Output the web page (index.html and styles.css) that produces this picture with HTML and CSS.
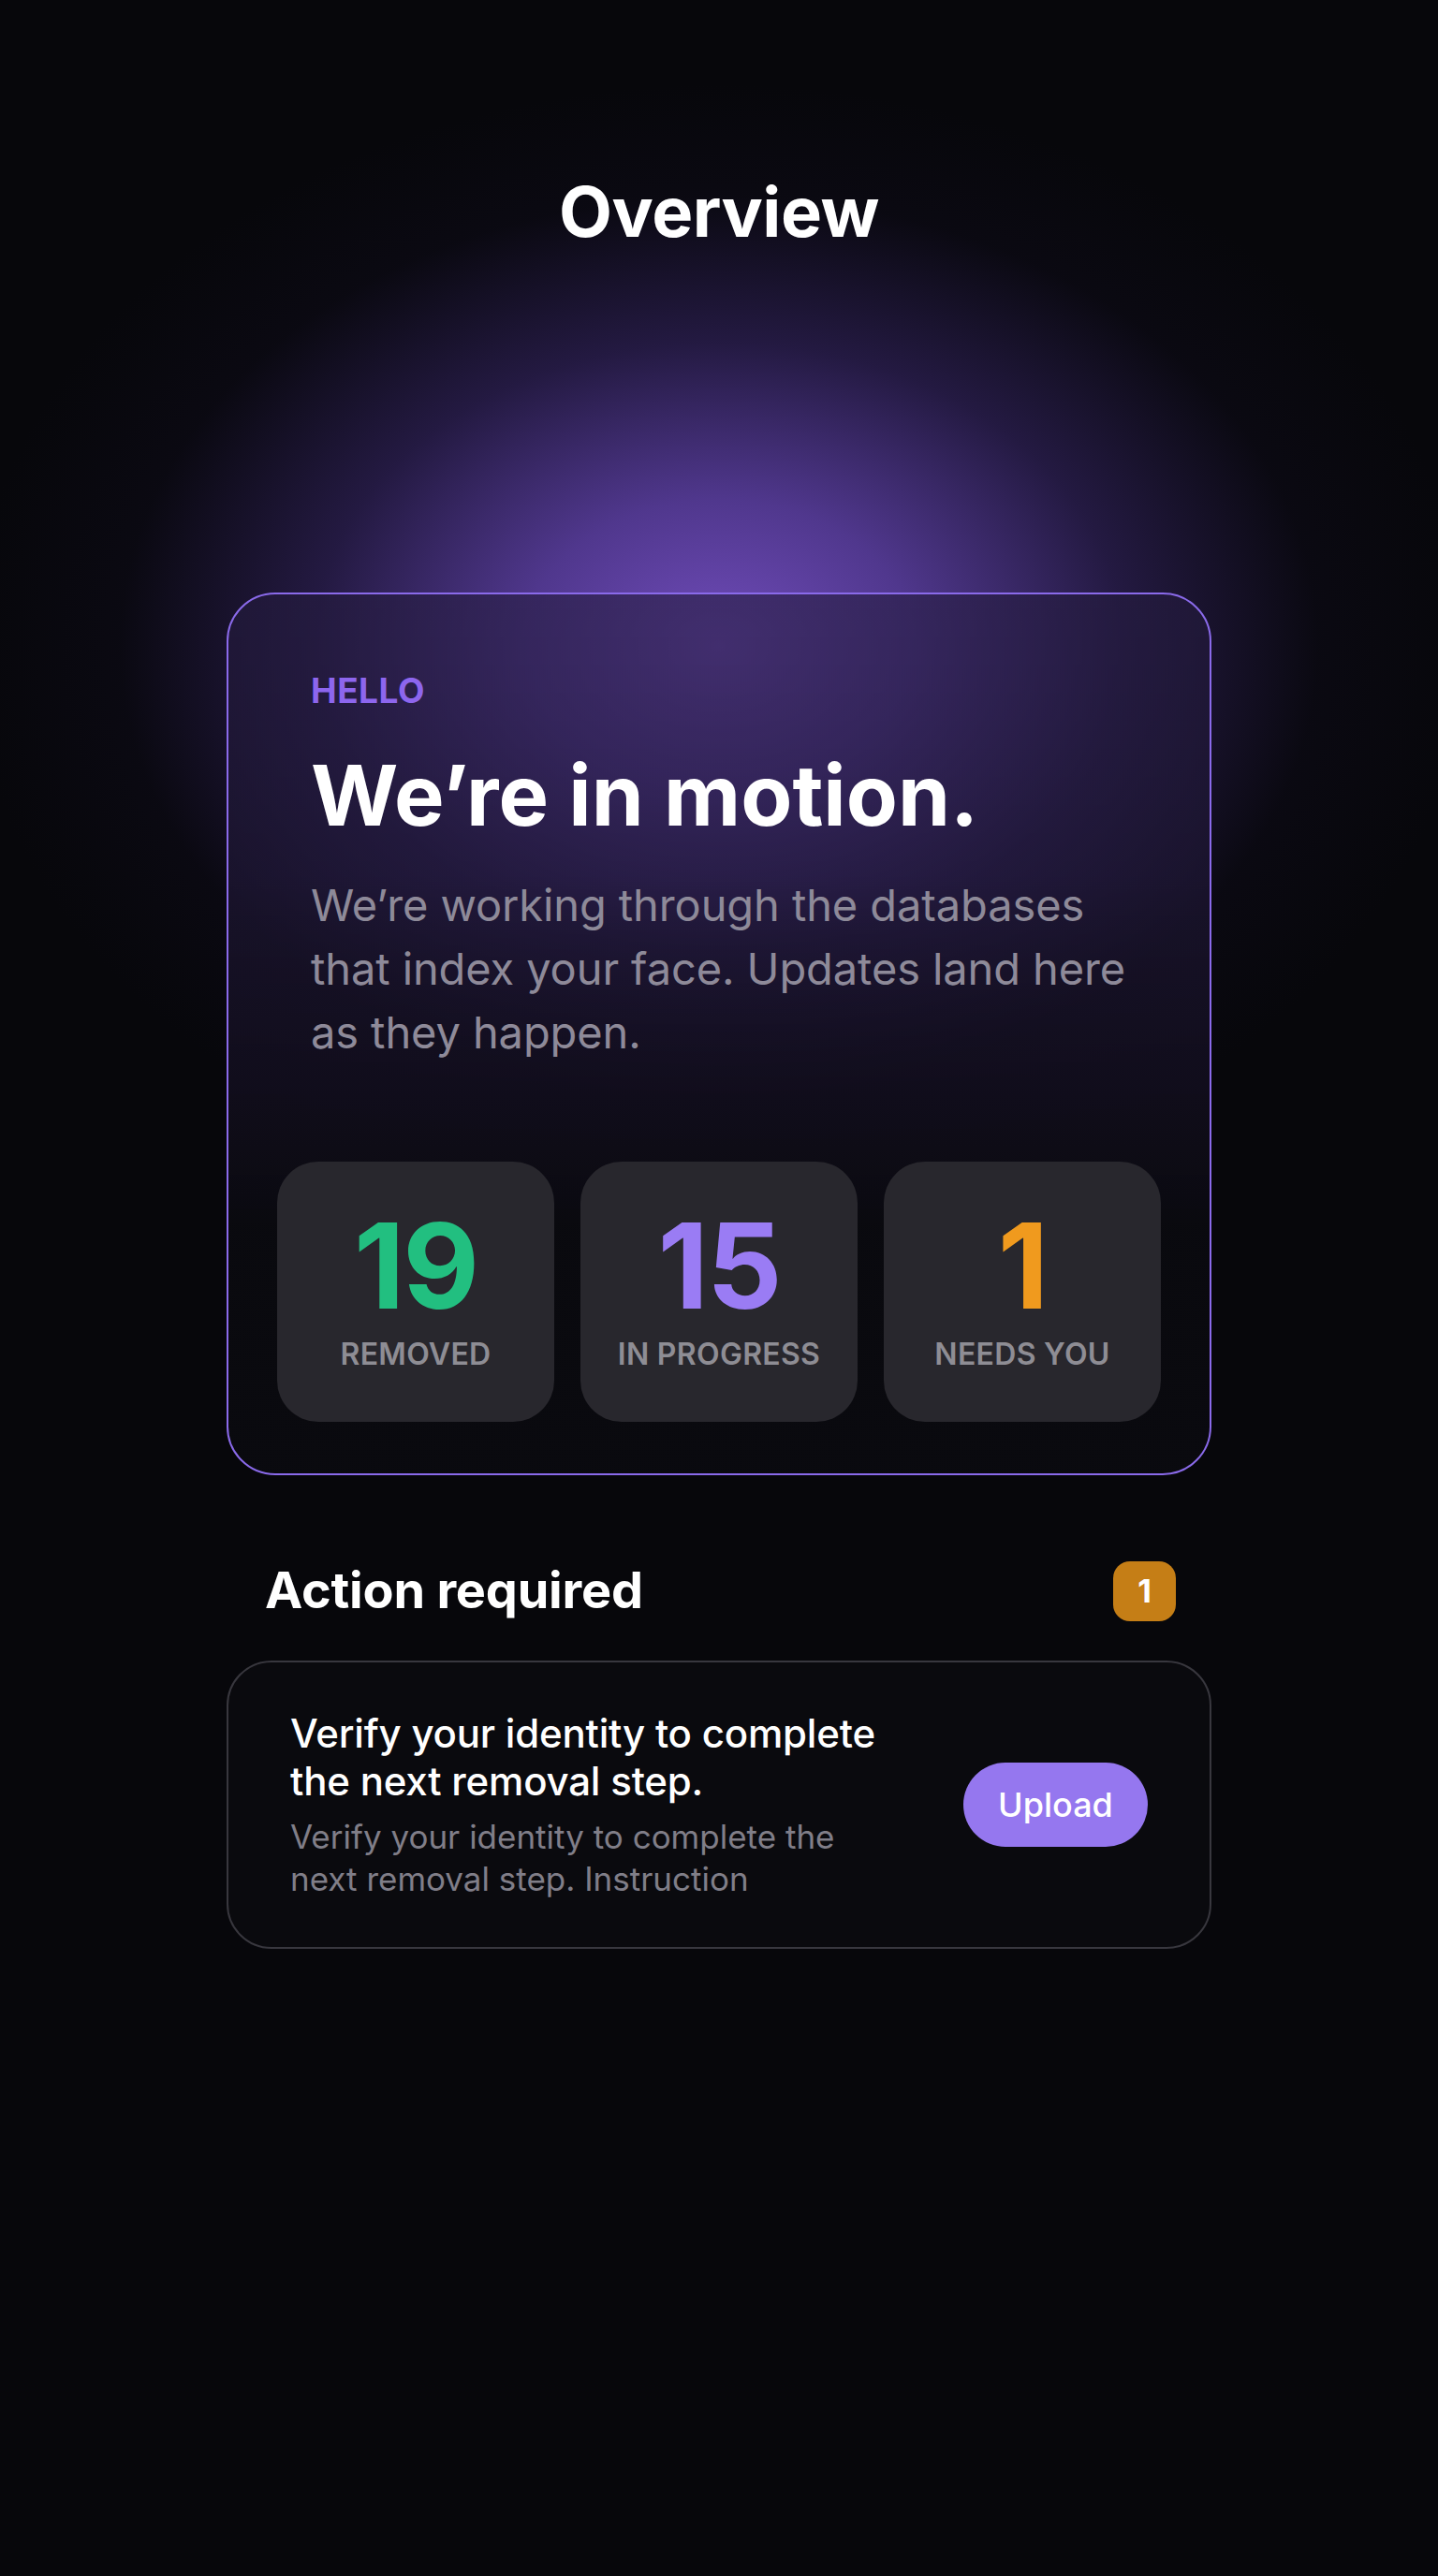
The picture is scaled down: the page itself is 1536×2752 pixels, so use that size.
FILE: index.html
```html
<!DOCTYPE html>
<html lang="en">
<head>
    <meta charset="UTF-8" />
    <meta name="viewport" content="width=device-width, initial-scale=1.0" />
    <title>Overview</title>
    <link rel="stylesheet" href="styles.css">
</head>
<body>
    <div id="page">
        <h1 class="title">Overview</h1>

        <div id="hero">
            <div class="hero-text">
                <div class="eyebrow">HELLO</div>
                <h2 class="headline">We’re in motion.</h2>
                <p class="lead">We’re working through the databases that index your face. Updates land here as they happen.</p>
            </div>

            <div class="stats">
                <div class="stat">
                    <div class="num green">19</div>
                    <div class="label">REMOVED</div>
                </div>
                <div class="stat">
                    <div class="num purple">15</div>
                    <div class="label">IN PROGRESS</div>
                </div>
                <div class="stat">
                    <div class="num orange">1</div>
                    <div class="label">NEEDS YOU</div>
                </div>
            </div>
        </div>

        <div class="section-head">
            <h3>Action required</h3>
            <span class="badge">1</span>
        </div>

        <div class="action">
            <div class="action-text">
                <div class="action-title">Verify your identity to complete the next removal step.</div>
                <div class="action-desc">Verify your identity to complete the next removal step. Instruction</div>
            </div>
            <button class="btn">Upload</button>
        </div>
    </div>
</body>
</html>
```

FILE: styles.css
```css
html, body {
    margin: 0;
    padding: 0;
}

body {
    min-height: 2752px;
    font-family: Inter, "Noto Sans", sans-serif;
    color: #fff;
    background-color: #07070b;
    background-image:
        radial-gradient(ellipse 800px 600px at 50% 690px, rgba(112, 76, 186, 1) 0%, rgba(96, 66, 170, 0.82) 26%, rgba(64, 44, 120, 0.5) 54%, rgba(28, 20, 52, 0.16) 80%, rgba(7, 7, 11, 0) 100%);
}

#page {
    width: 1052px;
    margin: 0 auto;
    padding-top: 182px;
}

.title {
    margin: 0;
    font-size: 74px;
    line-height: 1.2;
    font-weight: 700;
    text-align: center;
    letter-spacing: -0.5px;
}

#hero {
    margin-top: 362px;
    border: 2px solid #8a6aea;
    border-radius: 52px;
    padding: 81px 52px 55px;
    background: linear-gradient(180deg, rgba(36, 27, 62, 0.6) 0%, rgba(32, 24, 56, 0.64) 32%, rgba(18, 14, 30, 0.86) 56%, rgba(10, 10, 15, 0.97) 72%, rgba(10, 10, 15, 0.98) 100%);
}

.hero-text {
    padding: 0 36px;
}

.eyebrow {
    color: #8d66ee;
    font-size: 37px;
    line-height: 1.2;
    font-weight: 700;
    letter-spacing: 0.5px;
}

.headline {
    margin: 40px 0 0;
    font-size: 90px;
    line-height: 1.1;
    font-weight: 700;
    letter-spacing: 0;
}

.lead {
    margin: 34px 0 0;
    font-size: 47px;
    line-height: 68px;
    font-weight: 400;
    color: #8e8a99;
    letter-spacing: -0.1px;
}

.stats {
    display: grid;
    grid-template-columns: repeat(3, 1fr);
    gap: 28px;
    margin-top: 104px;
}

.stat {
    box-sizing: border-box;
    height: 278px;
    padding-bottom: 4px;
    border-radius: 44px;
    background: #28272d;
    display: flex;
    flex-direction: column;
    align-items: center;
    justify-content: center;
    gap: 13px;
}

.num {
    font-size: 126px;
    line-height: 1;
    font-weight: 700;
    letter-spacing: -2px;
}

.green { color: #22bf80; }
.purple { color: #9a7cf4; }
.orange { color: #f09a1e; }

.label {
    font-size: 32px;
    line-height: 1.2;
    font-weight: 600;
    color: #8e8d94;
    letter-spacing: 0.3px;
}

.section-head {
    display: flex;
    align-items: center;
    justify-content: space-between;
    margin-top: 91px;
    padding: 0 38px 0 41px;
}

.section-head h3 {
    margin: 0;
    font-size: 54px;
    line-height: 1.2;
    font-weight: 700;
    letter-spacing: -0.2px;
}

.badge {
    width: 67px;
    height: 64px;
    border-radius: 18px;
    background: #c57e16;
    display: flex;
    align-items: center;
    justify-content: center;
    font-size: 34px;
    font-weight: 700;
}

.action {
    margin-top: 42px;
    border: 2px solid #38373e;
    border-radius: 48px;
    background: #0a0a0e;
    padding: 50px 66px;
    display: flex;
    align-items: center;
    justify-content: space-between;
}

.action-text {
    max-width: 640px;
}

.action-title {
    font-size: 42px;
    line-height: 51px;
    font-weight: 500;
    letter-spacing: -0.2px;
}

.action-desc {
    margin-top: 12px;
    font-size: 35px;
    line-height: 45px;
    color: #807e88;
    letter-spacing: 0;
}

.btn {
    width: 197px;
    height: 90px;
    border: none;
    border-radius: 45px;
    background: #9577ef;
    color: #fff;
    font-family: inherit;
    font-size: 36px;
    font-weight: 500;
}
```
